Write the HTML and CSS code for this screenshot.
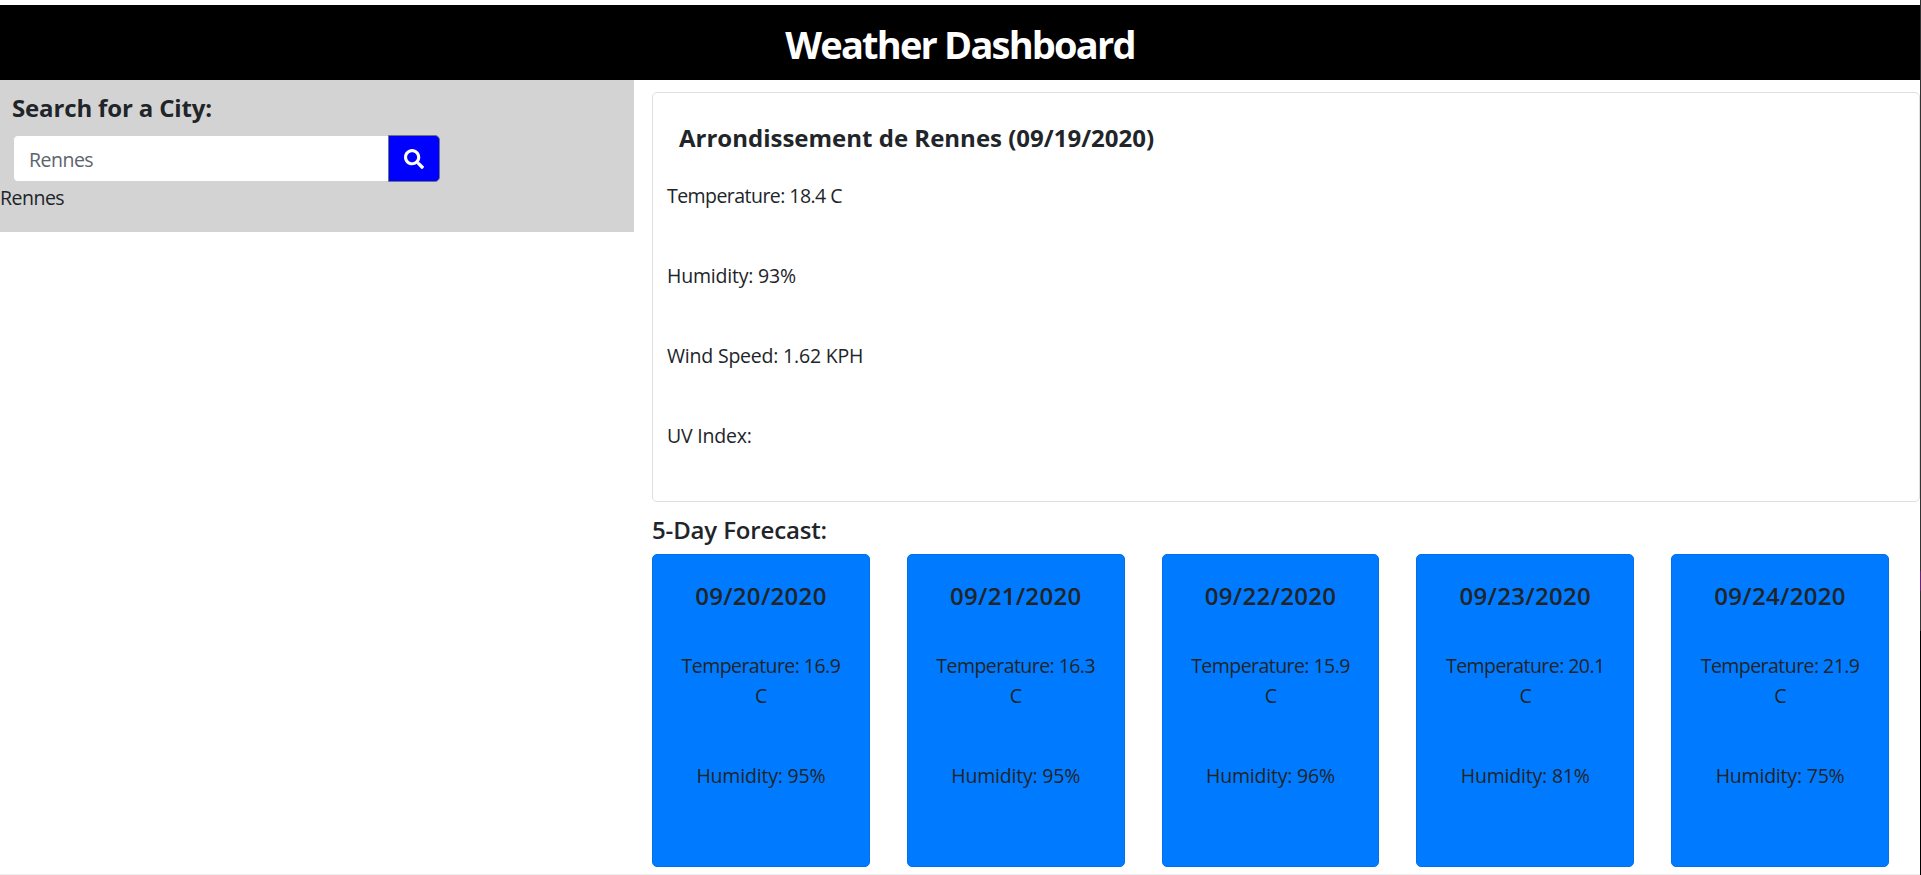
FILE: index.html
```html
<!DOCTYPE html>
<html lang="en">
<head>
<meta charset="utf-8">
<title>Weather Dashboard</title>
<link rel="stylesheet" href="styles.css">
</head>
<body>
<div class="page">
  <header class="header"><h1 class="title">Weather Dashboard</h1></header>
  <div class="columns">
    <aside class="sidebar">
      <h2 class="search-title">Search for a City:</h2>
      <form class="search">
        <input class="search-input" type="text" placeholder="Rennes" aria-label="City">
        <button class="search-button" type="button" aria-label="Search">
          <svg class="icon" viewBox="0 0 512 512"><path fill="currentColor" d="M505 442.7L405.3 343c-4.500-4.500-10.600-7-17-7H372c27.600-35.300 44-79.700 44-128C416 93.100 322.900 0 208 0S0 93.100 0 208s93.100 208 208 208c48.300 0 92.700-16.400 128-44v16.300c0 6.400 2.500 12.500 7 17l99.700 99.700c9.400 9.400 24.600 9.400 33.900 0l28.300-28.300c9.400-9.400 9.400-24.600.100-34zM208 336c-70.700 0-128-57.200-128-128 0-70.700 57.200-128 128-128 70.700 0 128 57.200 128 128 0 70.700-57.200 128-128 128z"/></svg>
        </button>
      </form>
      <div class="history">Rennes</div>
    </aside>
    <main class="main">
      <section class="current">
        <h2 class="current-title">Arrondissement de Rennes (09/19/2020)</h2>
        <p class="reading temperature">Temperature: 18.4 C</p>
        <p class="reading">Humidity: 93%</p>
        <p class="reading">Wind Speed: 1.62 KPH</p>
        <p class="reading">UV Index:</p>
      </section>
      <h2 class="forecast-title">5-Day Forecast:</h2>
      <section class="forecast">
        <article class="day"><h3 class="date">09/20/2020</h3><p class="temp temperature">Temperature: 16.9 C</p><p class="humidity">Humidity: 95%</p></article>
        <article class="day"><h3 class="date">09/21/2020</h3><p class="temp temperature">Temperature: 16.3 C</p><p class="humidity">Humidity: 95%</p></article>
        <article class="day"><h3 class="date">09/22/2020</h3><p class="temp temperature">Temperature: 15.9 C</p><p class="humidity">Humidity: 96%</p></article>
        <article class="day"><h3 class="date">09/23/2020</h3><p class="temp temperature">Temperature: 20.1 C</p><p class="humidity">Humidity: 81%</p></article>
        <article class="day"><h3 class="date">09/24/2020</h3><p class="temp temperature">Temperature: 21.9 C</p><p class="humidity">Humidity: 75%</p></article>
      </section>
    </main>
  </div>
</div>
<div class="edge"></div>
</body>
</html>
```
FILE: styles.css
```css
* { box-sizing: border-box; }
body {
  margin: 0;
  display: flex;
  height: 875px;
  overflow: hidden;
  background: #fff;
  color: #212529;
  font: 400 19.5px/30px "Open Sans", "Noto Sans", sans-serif;
  letter-spacing: -0.2px;
}
h1, h2, h3, p { margin: 0; }
.page { width: 1920px; height: 875px; padding-top: 5px; border-bottom: 1px solid #eee; }
.edge {
  width: 1px;
  background: linear-gradient(#333 571px, #68217a 571px 591px, #333 591px 631px, #000 631px);
}
.header { height: 75px; padding-top: 15px; background: #000; color: #fff; text-align: center; }
.title { font-size: 38px; line-height: 48px; font-weight: 700; letter-spacing: -1.8px; }
.columns { display: flex; align-items: flex-start; }
.sidebar { width: 634px; height: 152px; padding-top: 13px; background: #d3d3d3; }
.search-title { padding-left: 12px; font-size: 24px; line-height: 30px; font-weight: 700; letter-spacing: -0.15px; }
.search { display: flex; align-items: center; width: 427px; height: 47px; margin: 12px 0 0 13px; }
.search-input {
  flex: 1;
  min-width: 0;
  height: 47px;
  padding: 2px 15px 0;
  border: 1px solid #ced4da;
  border-right: 0;
  border-radius: 5px 0 0 5px;
  background: #fff;
  font: inherit;
  letter-spacing: -0.5px;
}
.search-input::placeholder { color: #5c646c; opacity: 1; }
.search-button {
  display: flex;
  align-items: center;
  justify-content: center;
  width: 52px;
  height: 47px;
  padding: 0;
  border: 1px solid #6c757d;
  border-radius: 0 5px 5px 0;
  background: #00f;
  color: #fff;
}
.icon { width: 20px; height: 20px; }
.history { margin-top: 1px; letter-spacing: -0.5px; }
.main { width: 1268px; margin-left: 18px; padding-top: 12px; }
.current { height: 410px; padding: 28px 14px 0; border: 1px solid #dfdfdf; border-radius: 5px; }
.current-title { padding-left: 12px; font-size: 24px; line-height: 34px; font-weight: 700; letter-spacing: 0; }
.reading { height: 30px; margin-bottom: 50px; }
.temperature { letter-spacing: -0.55px; }
.current-title + .reading { margin-top: 26px; }
.forecast-title { margin-top: 13px; font-size: 24px; line-height: 30px; font-weight: 600; letter-spacing: -0.15px; }
.forecast { display: flex; gap: 37px; margin-top: 9px; }
.day {
  width: 217.800px;
  height: 313px;
  padding: 26px 25px 0;
  border: 1px solid #0071eb;
  border-radius: 5px;
  background: #007bff;
  text-align: center;
}
.date { font-size: 24px; line-height: 30px; font-weight: 600; letter-spacing: 0.3px; }
.temp { margin-top: 40px; }
.humidity { margin-top: 50px; }
```
